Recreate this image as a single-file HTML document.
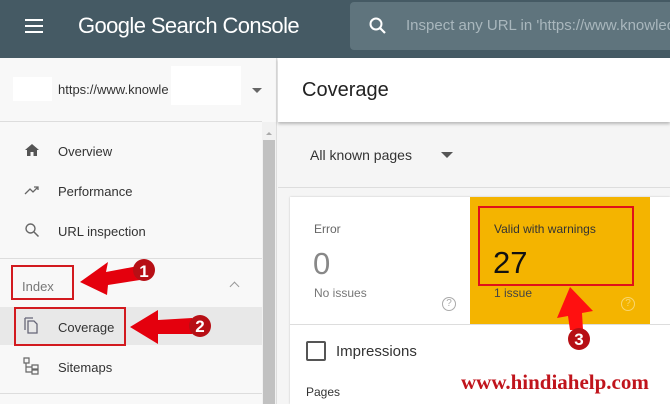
<!DOCTYPE html>
<html><head><style>
*{margin:0;padding:0;box-sizing:border-box}
body{width:670px;height:404px;overflow:hidden;font-family:"Liberation Sans",Arial,sans-serif;background:#f5f5f5;position:relative}
.a{position:absolute}
.hdr{left:0;top:0;width:670px;height:58px;background:#455a64}
.t{color:#333;font-size:13px}
</style></head><body>
<div class="a hdr"></div>
<div class="a" style="left:25px;top:19px;width:18px;height:2px;background:#fff;box-shadow:0 6px 0 #fff,0 12px 0 #fff"></div>
<div class="a" style="left:78px;top:13px;color:#fff;font-size:22px;letter-spacing:-0.6px;white-space:nowrap">Google Search Console</div>
<div class="a" style="left:350px;top:2px;width:330px;height:48px;background:#5f747d;border-radius:4px"></div>
<svg class="a" style="left:368px;top:16px" width="20" height="20" viewBox="0 0 20 20"><circle cx="8" cy="8" r="5.5" fill="none" stroke="#fff" stroke-width="2"/><path d="M12 12l5 5" stroke="#fff" stroke-width="2.2"/></svg>
<div class="a" style="left:406px;top:17px;color:#a9b7bd;font-size:15px;white-space:nowrap">Inspect any URL in 'https://www.knowled</div>

<div class="a" style="left:0;top:58px;width:277px;height:346px;background:#f8f8f8;border-right:1px solid #ddd"></div>
<div class="a" style="left:13px;top:77px;width:39px;height:24px;background:#fff"></div>
<div class="a" style="left:171px;top:66px;width:70px;height:39px;background:#fff"></div>
<div class="a t" style="left:58px;top:82px">https://www.knowle</div>
<div class="a" style="left:252px;top:88px;border:5px solid transparent;border-top-color:#666"></div>
<div class="a" style="left:0;top:121px;width:262px;height:1px;background:#ddd"></div>
<div class="a" style="left:262px;top:122px;width:14px;height:282px;background:#f1f1f1"></div>
<div class="a" style="left:263px;top:140px;width:12px;height:264px;background:#c1c1c1"></div>
<div class="a" style="left:266px;top:129px;border:3px solid transparent;border-bottom-color:#aaa"></div>
<svg class="a" style="left:24px;top:143px" width="16" height="14"><path d="M8 1L1 7h2v6h3.5V9h3v4H13V7h2z" fill="#555"/></svg>
<div class="a t" style="left:58px;top:144px">Overview</div>
<svg class="a" style="left:24px;top:184px" width="16" height="12"><path d="M1 10l5-5 3 3 5-5M10 3h4v3" fill="none" stroke="#666" stroke-width="1.3"/></svg>
<div class="a t" style="left:58px;top:184px">Performance</div>
<svg class="a" style="left:24px;top:222px" width="16" height="16"><circle cx="6.5" cy="6.5" r="4.5" fill="none" stroke="#666" stroke-width="1.4"/><path d="M10 10l4.5 4.5" stroke="#666" stroke-width="1.5"/></svg>
<div class="a t" style="left:58px;top:224px">URL inspection</div>
<div class="a" style="left:0;top:258px;width:262px;height:1px;background:#ddd"></div>
<div class="a" style="left:22px;top:279px;color:#777;font-size:13px">Index</div>
<div class="a" style="left:231px;top:283px;width:7px;height:7px;border-left:1.3px solid #999;border-top:1.3px solid #999;transform:rotate(45deg)"></div>
<div class="a" style="left:0;top:307px;width:262px;height:38px;background:#e8e8e8"></div>
<svg class="a" style="left:23px;top:316px" width="16" height="18"><path d="M2 2v12M2 2h8M5 5h6l3 3v9H5z" fill="none" stroke="#667" stroke-width="1.3"/></svg>
<div class="a t" style="left:58px;top:320px">Coverage</div>
<svg class="a" style="left:23px;top:357px" width="16" height="18"><path d="M1 1h5v5H1zM9 8h6v4H9zM9 13h6v4H9zM3 6v9h6M3 10h6" fill="none" stroke="#666" stroke-width="1.2"/></svg>
<div class="a t" style="left:58px;top:360px">Sitemaps</div>
<div class="a" style="left:0;top:393px;width:262px;height:1px;background:#ddd"></div>

<div class="a" style="left:278px;top:58px;width:392px;height:64px;background:#fff;box-shadow:0 2px 3px rgba(0,0,0,.25)"></div>
<div class="a" style="left:302px;top:79px;font-size:20px;color:#222">Coverage</div>
<div class="a" style="left:310px;top:147px;font-size:14px;color:#333">All known pages</div>
<div class="a" style="left:441px;top:152px;border:6px solid transparent;border-top-color:#555"></div>
<div class="a" style="left:278px;top:187px;width:392px;height:1px;background:#ddd"></div>
<div class="a" style="left:290px;top:197px;width:380px;height:207px;background:#fff;box-shadow:0 0 2px rgba(0,0,0,.2)"></div>
<div class="a" style="left:314px;top:222px;font-size:12px;color:#666">Error</div>
<div class="a" style="left:313px;top:246px;font-size:31px;color:#888">0</div>
<div class="a" style="left:314px;top:286px;font-size:12px;color:#777">No issues</div>
<div class="a" style="left:442px;top:297px;width:14px;height:14px;border:1.3px solid #aaa;border-radius:50%;font-size:10px;color:#aaa;text-align:center;line-height:12px">?</div>
<div class="a" style="left:470px;top:197px;width:180px;height:127px;background:#f4b400"></div>
<div class="a" style="left:494px;top:222px;font-size:12px;color:#333">Valid with warnings</div>
<div class="a" style="left:493px;top:245px;font-size:31px;color:#111">27</div>
<div class="a" style="left:494px;top:286px;font-size:12px;color:#444">1 issue</div>
<div class="a" style="left:621px;top:297px;width:14px;height:14px;border:1.3px solid #f8d66e;border-radius:50%;font-size:10px;color:#f8d66e;text-align:center;line-height:12px">?</div>
<div class="a" style="left:290px;top:324px;width:380px;height:1px;background:#ddd"></div>
<div class="a" style="left:306px;top:341px;width:20px;height:20px;border:2px solid #555;border-radius:2px"></div>
<div class="a" style="left:336px;top:343px;font-size:15px;color:#333">Impressions</div>
<div class="a" style="left:306px;top:385px;font-size:12px;color:#333">Pages</div>
<div class="a" style="left:461px;top:370px;font-family:'Liberation Serif',serif;font-weight:bold;font-size:21px;color:#c0141c;white-space:nowrap">www.hindiahelp.com</div>

<div class="a" style="left:11px;top:265px;width:63px;height:35px;border:2px solid #d21a1f"></div>
<div class="a" style="left:14px;top:307px;width:112px;height:39px;border:2px solid #d21a1f"></div>
<div class="a" style="left:478px;top:206px;width:156px;height:80px;border:2px solid #e0101a"></div>
<svg class="a" style="left:0;top:0" width="670" height="404">
<path d="M80 282L108 262L106 272L138 266L140 280L108 285L107 295Z" fill="#e4000d"/>
<circle cx="144" cy="270" r="11" fill="#b70f15"/>
<text x="144" y="277" font-family="Liberation Sans" font-weight="bold" font-size="17" fill="#fff" text-anchor="middle">1</text>
<path d="M130 327L158 310L158 320L192 318L192 334L158 334L158 344Z" fill="#e4000d"/>
<circle cx="200" cy="326" r="11" fill="#b70f15"/>
<text x="200" y="332" font-family="Liberation Sans" font-weight="bold" font-size="17" fill="#fff" text-anchor="middle">2</text>
<path d="M570 287L593 311L582 313L583 330L570 330L568 316L557 318Z" fill="#ff1010"/>
<circle cx="579" cy="339" r="11" fill="#b70f15"/>
<text x="579" y="345" font-family="Liberation Sans" font-weight="bold" font-size="17" fill="#fff" text-anchor="middle">3</text>
</svg>
</body></html>
